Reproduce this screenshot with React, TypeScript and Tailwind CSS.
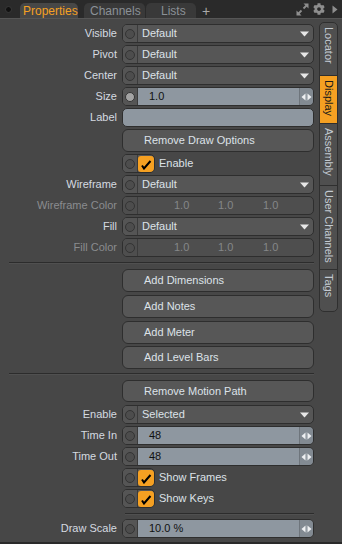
import React from "react";
import { FaCog } from "react-icons/fa";

const LBL = "text-[#d5dae0]";
const DIS = "text-[#8a8c8f]";

function KeyDot({ filled = false, bg = "bg-[#555555]" }: { filled?: boolean; bg?: string }) {
  return (
    <div className={`w-[15px] h-full flex items-center justify-center border-r border-[#3b3b3b] ${bg} shrink-0`}>
      <div
        className={`w-[10px] h-[10px] rounded-full border border-[#343434] ${filled ? "bg-[#a3a3a3]" : "bg-[#4d4d4d]"}`}
      />
    </div>
  );
}

function Row({ label, disabled = false, h = "h-[21px]", children }: { label?: string; disabled?: boolean; h?: string; children: React.ReactNode }) {
  return (
    <div className={`flex items-center ${h}`}>
      <div className={`w-[122px] pr-[5px] text-right whitespace-nowrap ${disabled ? DIS : LBL}`}>{label}</div>
      {children}
    </div>
  );
}

function Box({ children, bg = "bg-[#565656]" }: { children: React.ReactNode; bg?: string }) {
  return (
    <div className={`w-[192px] h-[19px] rounded-[5px] border border-[#2e2e2e] ${bg} flex overflow-hidden`}>{children}</div>
  );
}

function Dropdown({ value }: { value: string }) {
  return (
    <Box>
      <KeyDot />
      <div className="flex-1 flex items-center pl-[4px] text-[#dde2e8]">{value}</div>
      <div className="w-[18px] flex items-center justify-center">
        <svg width="9" height="6" viewBox="0 0 9 6">
          <path d="M0 0.5 L9 0.5 L4.5 5.5 Z" fill="#e6e6e6" />
        </svg>
      </div>
    </Box>
  );
}

function Numeric({ value, filled = false }: { value: string; filled?: boolean }) {
  return (
    <Box>
      <KeyDot filled={filled} />
      <div className="flex-1 flex items-center pl-[11px] bg-[#8e97a0] text-[#111]">{value}</div>
      <div className="w-[14px] flex items-center justify-center bg-[#828a92] border-l border-[#6e757c]">
        <svg width="11" height="8" viewBox="0 0 11 8">
          <path d="M4.5 0.5 L0.5 4 L4.5 7.5 Z" fill="#eef0f2" />
          <path d="M6.5 0.5 L10.5 4 L6.5 7.5 Z" fill="#eef0f2" />
          <rect x="5.1" y="0" width="0.8" height="8" fill="#9aa1a8" />
        </svg>
      </div>
    </Box>
  );
}

function Triple() {
  return (
    <Box bg="bg-[#4e4e4e]">
      <KeyDot bg="bg-[#4e4e4e]" />
      <div className="flex-1 flex items-center pl-[36px] text-[#858789]">
        <span className="w-[44px]">1.0</span>
        <span className="w-[45px]">1.0</span>
        <span>1.0</span>
      </div>
    </Box>
  );
}

function Button({ label, h = "h-[23px]" }: { label: string; h?: string }) {
  return (
    <div className="flex items-center h-full">
      <div className="w-[122px]" />
      <div className={`w-[192px] ${h} rounded-[6px] border border-[#2e2e2e] bg-[#575757] flex items-center pl-[21px] text-[#dde2e8]`}>
        {label}
      </div>
    </div>
  );
}

function Check({ label }: { label: string }) {
  return (
    <div className="flex items-center h-[21px]">
      <div className="w-[122px]" />
      <div className="h-[19px] w-[33px] rounded-[5px] border border-[#2e2e2e] bg-[#555555] flex overflow-hidden">
        <KeyDot />
        <div className="flex-1 flex items-center justify-center">
          <div className="w-[16px] h-[16px] rounded-[3px] bg-[#f5a022] flex items-center justify-center">
            <svg width="12" height="12" viewBox="0 0 12 12">
              <path d="M2 7.5 L4 10.5 L10.5 3" stroke="#000" strokeWidth="2" fill="none" />
            </svg>
          </div>
        </div>
      </div>
      <span className="ml-[4px] text-[#dde2e8]">{label}</span>
    </div>
  );
}

function Sep({ h, full = true, mt }: { h: string; full?: boolean; mt: string }) {
  return (
    <div className={`${h} ${full ? "pl-[9px]" : "pl-[125px]"}`}>
      <div className={`${mt} w-auto mr-[4px] border-t border-[#2c2c2c] border-b border-b-[#505050]`} />
    </div>
  );
}

function SideTab({ label, h, active = false, first = false, last = false }: { label: string; h: string; active?: boolean; first?: boolean; last?: boolean }) {
  return (
    <div
      className={`${h} w-[19px] border border-[#2f2f2f] ${first ? "rounded-t-[5px]" : ""} ${last ? "rounded-b-[5px]" : ""} ${
        active ? "bg-[#f5a022] text-[#1a1a1a]" : "bg-[#4f4f4f] text-[#c3cad2]"
      } flex items-start justify-center pt-[4px] -mt-[1px]`}
    >
      <span className="[writing-mode:vertical-rl] whitespace-nowrap">{label}</span>
    </div>
  );
}

export default function App() {
  return (
    <div className="w-[342px] h-[544px] bg-[#2a2a2a] flex flex-col overflow-hidden font-['Liberation_Sans',Arial,sans-serif] text-[11px] leading-none">
      {/* top bar */}
      <div className="h-[18px] flex items-end relative shrink-0">
        <div className="absolute left-[5px] top-[6px] w-[7px] h-[7px] rounded-full bg-[#101010] border border-[#3a3a3a]" />
        <div className="ml-[20px] w-[58px] h-[15px] rounded-t-[5px] bg-[#474747] text-[#f5a022] text-[12px] flex items-center pl-[3px] pt-[1px]">
          Properties
        </div>
        <div className="ml-[6px] w-[61px] h-[15px] rounded-t-[5px] bg-[#393939] text-[#8b9197] text-[12px] flex items-center pl-[6px] pt-[1px]">
          Channels
        </div>
        <div className="ml-[1px] w-[50px] h-[15px] rounded-t-[5px] bg-[#393939] text-[#8b9197] text-[12px] flex items-center pl-[15px] pt-[1px]">
          Lists
        </div>
        <div className="ml-[6px] h-[15px] text-[#a9a9a9] text-[14px] flex items-center">+</div>
        <div className="flex-1" />
        <div className="h-[18px] flex items-center gap-[4px] pr-[4px]">
          <svg width="13" height="13" viewBox="0 0 13 13">
            <path d="M7.5 0.5 L12.5 0.5 L12.5 5.5 Z" fill="#8e8e8e" />
            <path d="M11 2 L7.5 5.5" stroke="#8e8e8e" strokeWidth="1.8" />
            <path d="M0.5 7.5 L0.5 12.5 L5.5 12.5 Z" fill="#8e8e8e" />
            <path d="M2 11 L5.5 7.5" stroke="#8e8e8e" strokeWidth="1.8" />
          </svg>
          <FaCog className="w-[12px] h-[12px] text-[#8e8e8e]" />
          <svg width="6" height="9" viewBox="0 0 6 9" className="ml-[3px]">
            <path d="M0.5 0.5 L5.5 4.5 L0.5 8.5 Z" fill="#8e8e8e" />
          </svg>
        </div>
      </div>

      {/* body */}
      <div className="h-[524px] bg-[#474747] flex border-t border-[#565656] shrink-0">
        <div className="w-[318px] pt-[4px] flex flex-col">
          <Row label="Visible"><Dropdown value="Default" /></Row>
          <Row label="Pivot"><Dropdown value="Default" /></Row>
          <Row label="Center"><Dropdown value="Default" /></Row>
          <Row label="Size"><Numeric value="1.0" filled /></Row>
          <Row label="Label">
            <div className="w-[192px] h-[19px] rounded-[5px] border border-[#2e2e2e] bg-[#8e97a0]" />
          </Row>
          <div className="h-[25px]"><Button label="Remove Draw Options" /></div>
          <Check label="Enable" />
          <Row label="Wireframe"><Dropdown value="Default" /></Row>
          <Row label="Wireframe Color" disabled><Triple /></Row>
          <Row label="Fill"><Dropdown value="Default" /></Row>
          <Row label="Fill Color" disabled><Triple /></Row>
          <Sep h="h-[10px]" mt="mt-[4px]" />
          <div className="h-[25px]"><Button label="Add Dimensions" /></div>
          <div className="h-[26px]"><Button label="Add Notes" /></div>
          <div className="h-[26px]"><Button label="Add Meter" /></div>
          <div className="h-[25px]"><Button label="Add Level Bars" /></div>
          <Sep h="h-[8px]" mt="mt-[3px]" />
          <div className="h-[26px]"><Button label="Remove Motion Path" h="h-[22px]" /></div>
          <Row label="Enable"><Dropdown value="Selected" /></Row>
          <Row label="Time In"><Numeric value="48" /></Row>
          <Row label="Time Out"><Numeric value="48" /></Row>
          <Check label="Show Frames" />
          <Check label="Show Keys" />
          <Sep h="h-[9px]" full={false} mt="mt-[4px]" />
          <Row label="Draw Scale"><Numeric value="10.0 %" /></Row>
        </div>
        <div className="flex-1 flex flex-col pt-[4px] pl-[1px]">
          <SideTab label="Locator" h="h-[54px]" first />
          <SideTab label="Display" h="h-[49px]" active />
          <SideTab label="Assembly" h="h-[63px]" />
          <SideTab label="User Channels" h="h-[85px]" />
          <SideTab label="Tags" h="h-[43px]" last />
        </div>
      </div>
    </div>
  );
}
